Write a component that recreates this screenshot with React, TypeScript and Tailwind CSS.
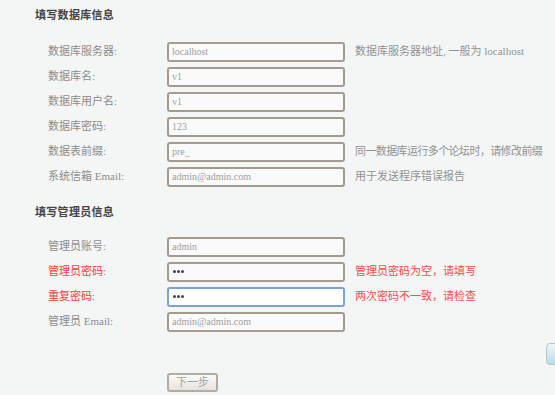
import React from "react";

const font = { fontFamily: "'Liberation Serif', 'Noto Sans CJK SC', serif" };

type Row = { label: string; value: string; hint?: string; red?: boolean; focus?: boolean; dots?: boolean; tight?: boolean };

const dbRows: Row[] = [
  { label: "数据库服务器:", value: "localhost", hint: "数据库服务器地址, 一般为 localhost" },
  { label: "数据库名:", value: "v1" },
  { label: "数据库用户名:", value: "v1" },
  { label: "数据库密码:", value: "123" },
  { label: "数据表前缀:", value: "pre_", hint: "同一数据库运行多个论坛时，请修改前缀", tight: true },
  { label: "系统信箱 Email:", value: "admin@admin.com", hint: "用于发送程序错误报告" },
];

const adminRows: Row[] = [
  { label: "管理员账号:", value: "admin" },
  { label: "管理员密码:", value: "•••", hint: "管理员密码为空，请填写", red: true, dots: true },
  { label: "重复密码:", value: "•••", hint: "两次密码不一致，请检查", red: true, focus: true, dots: true },
  { label: "管理员 Email:", value: "admin@admin.com" },
];

function FormRow({ r }: { r: Row }) {
  return (
    <div className="flex h-[25px] items-center">
      <div className={`w-[167px] pl-[48px] shrink-0 text-[11px] whitespace-nowrap ${r.red ? "text-[#ff3b3b]" : "text-[#8c8c8c]"}`}>
        {r.label}
      </div>
      <div
        className={`h-[20px] w-[178px] shrink-0 rounded-[3px] flex items-center pl-[3px] text-[10px] ${
          r.focus
            ? "border-2 border-[#7aa3d6] bg-white"
            : "border-2 border-[#a39b90] bg-[#fafafa]"
        } ${r.dots ? "text-[#333]" : "text-[#a0a0a0]"}`}
      >
        {r.dots ? (
          <span className="flex gap-[1px] pl-[1px]">
            <span className="h-[3px] w-[3px] rounded-full bg-[#444]" />
            <span className="h-[3px] w-[3px] rounded-full bg-[#444]" />
            <span className="h-[3px] w-[3px] rounded-full bg-[#444]" />
          </span>
        ) : (
          <span>{r.value}</span>
        )}
      </div>
      {r.hint && (
        <div
          className={`ml-[10px] text-[11px] whitespace-nowrap ${r.tight ? "tracking-[-0.6px]" : ""} ${
            r.red ? "text-[#ff4a4a]" : "text-[#929292]"
          }`}
        >
          {r.hint}
        </div>
      )}
    </div>
  );
}

export default function App() {
  return (
    <div className="relative w-[555px] h-[395px] overflow-hidden bg-[#f4f6f6]" style={font}>
      <div className="flex flex-col pt-[8px]">
        <div className="h-[14px] pl-[35px] flex items-center text-[11px] font-bold text-[#444] tracking-[0.3px]">填写数据库信息</div>
        <div className="mt-[17px] flex flex-col">
          {dbRows.map((r) => (
            <FormRow key={r.label} r={r} />
          ))}
        </div>
        <div className="mt-[16px] h-[14px] pl-[35px] flex items-center text-[11px] font-bold text-[#444] tracking-[0.3px]">填写管理员信息</div>
        <div className="mt-[15px] flex flex-col">
          {adminRows.map((r) => (
            <FormRow key={r.label} r={r} />
          ))}
        </div>
        <div className="mt-[39px] pl-[167px]">
          <button className="h-[19px] w-[51px] rounded-[3px] border-2 border-[#b3aca2] bg-gradient-to-b from-[#fbfbfa] to-[#e6e3de] text-[11px] text-[#a0a0a0] flex items-center justify-center">
            下一步
          </button>
        </div>
      </div>
      <div className="absolute left-[546px] top-[343px] h-[22px] w-[20px] rounded-[4px] border border-[#b9c4cc] bg-gradient-to-b from-[#eef7fb] to-[#b9dcec]" />
    </div>
  );
}
